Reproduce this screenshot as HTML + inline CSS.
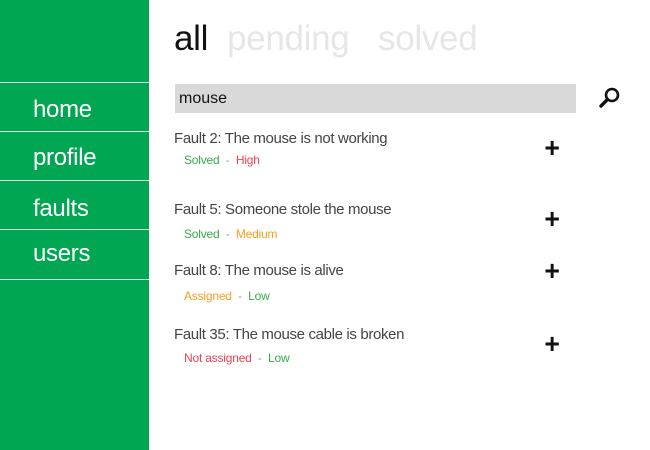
<!DOCTYPE html>
<html><head><style>
body{margin:0;width:650px;height:450px;background:#fff;font-family:"Liberation Sans",sans-serif;position:relative;overflow:hidden}
.side{position:absolute;left:0;top:0;width:149px;height:450px;background:#00a651}
.line{position:absolute;left:0;width:149px;height:1px;background:#d8f0e0}
.nav{position:absolute;left:33px;color:#fff;font-size:24px;letter-spacing:-0.3px}
.tab{position:absolute;top:19px;font-size:35px;letter-spacing:-0.3px}
.search{position:absolute;left:175px;top:84px;width:401px;height:29px;background:#d9d9d9}
.search span{position:absolute;left:4px;top:6px;font-size:16px;color:#111}
.t{position:absolute;left:174px;font-size:15px;color:#444;letter-spacing:-0.35px}
.s{position:absolute;left:184px;font-size:12px;letter-spacing:-0.2px}
.g{color:#3aa84a}.r{color:#e8434f}.o{color:#f0a020}.d{color:#999}
.plus{position:absolute;left:544px;font-size:28px;color:#111;line-height:1;font-weight:bold;transform:scaleX(0.95)}
</style></head><body>
<div class="side"></div>
<div class="line" style="top:82px"></div>
<div class="line" style="top:131px"></div>
<div class="line" style="top:180px"></div>
<div class="line" style="top:229px"></div>
<div class="line" style="top:279px"></div>
<div class="nav" style="top:96px">home</div>
<div class="nav" style="top:144px">profile</div>
<div class="nav" style="top:195px">faults</div>
<div class="nav" style="top:240px">users</div>
<div class="tab" style="left:174px;color:#111">all</div>
<div class="tab" style="left:227px;color:#e6e6e6">pending</div>
<div class="tab" style="left:378px;color:#e6e6e6">solved</div>
<div class="search"><span>mouse</span></div>
<svg style="position:absolute;left:598px;top:86px" width="24" height="24" viewBox="0 0 24 24"><circle cx="14" cy="9" r="6" fill="none" stroke="#111" stroke-width="2.6"/><line x1="9.5" y1="13.5" x2="3" y2="20" stroke="#111" stroke-width="3.4" stroke-linecap="round"/></svg>
<div class="t" style="top:130px">Fault 2: The mouse is not working</div>
<div class="s" style="top:153px"><span class="g">Solved</span> <span class="d">&nbsp;-&nbsp;</span> <span class="r">High</span></div>
<div class="plus" style="top:134px">+</div>
<div class="t" style="top:201px">Fault 5: Someone stole the mouse</div>
<div class="s" style="top:227px"><span class="g">Solved</span> <span class="d">&nbsp;-&nbsp;</span> <span class="o">Medium</span></div>
<div class="plus" style="top:205px">+</div>
<div class="t" style="top:262px">Fault 8: The mouse is alive</div>
<div class="s" style="top:289px"><span class="o">Assigned</span> <span class="d">&nbsp;-&nbsp;</span> <span class="g">Low</span></div>
<div class="plus" style="top:257px">+</div>
<div class="t" style="top:326px">Fault 35: The mouse cable is broken</div>
<div class="s" style="top:351px"><span class="r">Not assigned</span> <span class="d">&nbsp;-&nbsp;</span> <span class="g">Low</span></div>
<div class="plus" style="top:330px">+</div>
</body></html>
